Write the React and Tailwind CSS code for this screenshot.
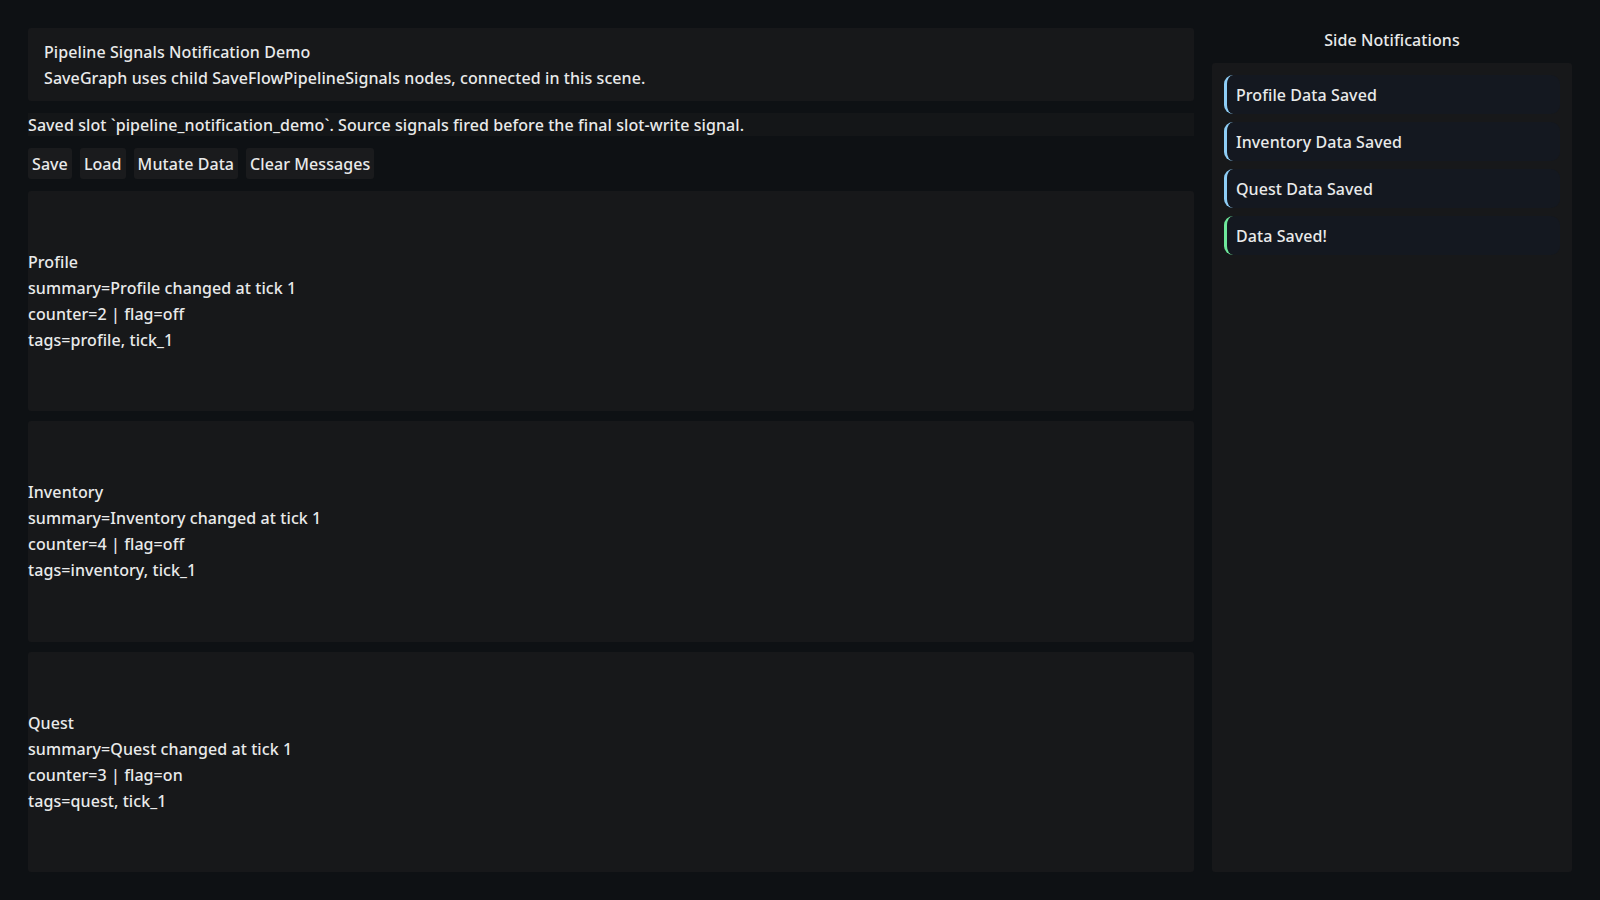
import React from 'react';

const sections = [
  { name: 'Profile', summary: 'Profile changed at tick 1', counter: 2, flag: 'off', tags: 'profile, tick_1' },
  { name: 'Inventory', summary: 'Inventory changed at tick 1', counter: 4, flag: 'off', tags: 'inventory, tick_1' },
  { name: 'Quest', summary: 'Quest changed at tick 1', counter: 3, flag: 'on', tags: 'quest, tick_1' },
];

const notices = [
  { text: 'Profile Data Saved', tone: 'border-[#8ecdf5]' },
  { text: 'Inventory Data Saved', tone: 'border-[#8ecdf5]' },
  { text: 'Quest Data Saved', tone: 'border-[#8ecdf5]' },
  { text: 'Data Saved!', tone: 'border-[#6ee89b]' },
];

const App = () => {
  return (
    <div
      className="w-[1600px] h-[900px] bg-[#0e1114] text-[#e9eaea] text-[16px] font-medium tracking-[0.08px] leading-[26px] flex gap-[18px] pl-[28px] pr-[28px] pt-[28px] pb-[28px] overflow-hidden"
      style={{ fontFamily: '"Noto Sans", "Open Sans", sans-serif' }}
    >
      <div className="flex-1 flex flex-col">
        <div className="bg-[#17181a] rounded-[3px] px-[16px] pt-[11px] pb-[10px] h-[73px]">
          <p>Pipeline Signals Notification Demo</p>
          <p>SaveGraph uses child SaveFlowPipelineSignals nodes, connected in this scene.</p>
        </div>

        <div className="mt-[12px] bg-[#141618] h-[23px] leading-[25px]">
          Saved slot `pipeline_notification_demo`. Source signals fired before the final slot-write signal.
        </div>

        <div className="mt-[12px] flex gap-[8px]">
          {['Save', 'Load', 'Mutate Data', 'Clear Messages'].map((b) => (
            <button key={b} className="bg-[#1a1b1d] rounded-[3px] h-[31px] px-[4px] leading-[33px]">
              {b}
            </button>
          ))}
        </div>

        <div className="mt-[12px] flex-1 flex flex-col gap-[10px]">
          {sections.map((s) => (
            <div key={s.name} className="flex-1 bg-[#17181a] rounded-[3px] flex flex-col justify-center">
              <p>{s.name}</p>
              <p>summary={s.summary}</p>
              <p>counter={s.counter} | flag={s.flag}</p>
              <p>tags={s.tags}</p>
            </div>
          ))}
        </div>
      </div>

      <div className="w-[360px] flex flex-col">
        <div className="h-[35px] text-center leading-[24px]">Side Notifications</div>
        <div className="flex-1 bg-[#17181a] rounded-[3px] px-[12px] pt-[12px] flex flex-col gap-[8px]">
          {notices.map((n) => (
            <div
              key={n.text}
              className={`h-[39px] bg-[#141820] rounded-[9px] border-l-[3px] ${n.tone} pl-[9px] flex items-center`}
            >
              {n.text}
            </div>
          ))}
        </div>
      </div>
    </div>
  );
};

export default App;
